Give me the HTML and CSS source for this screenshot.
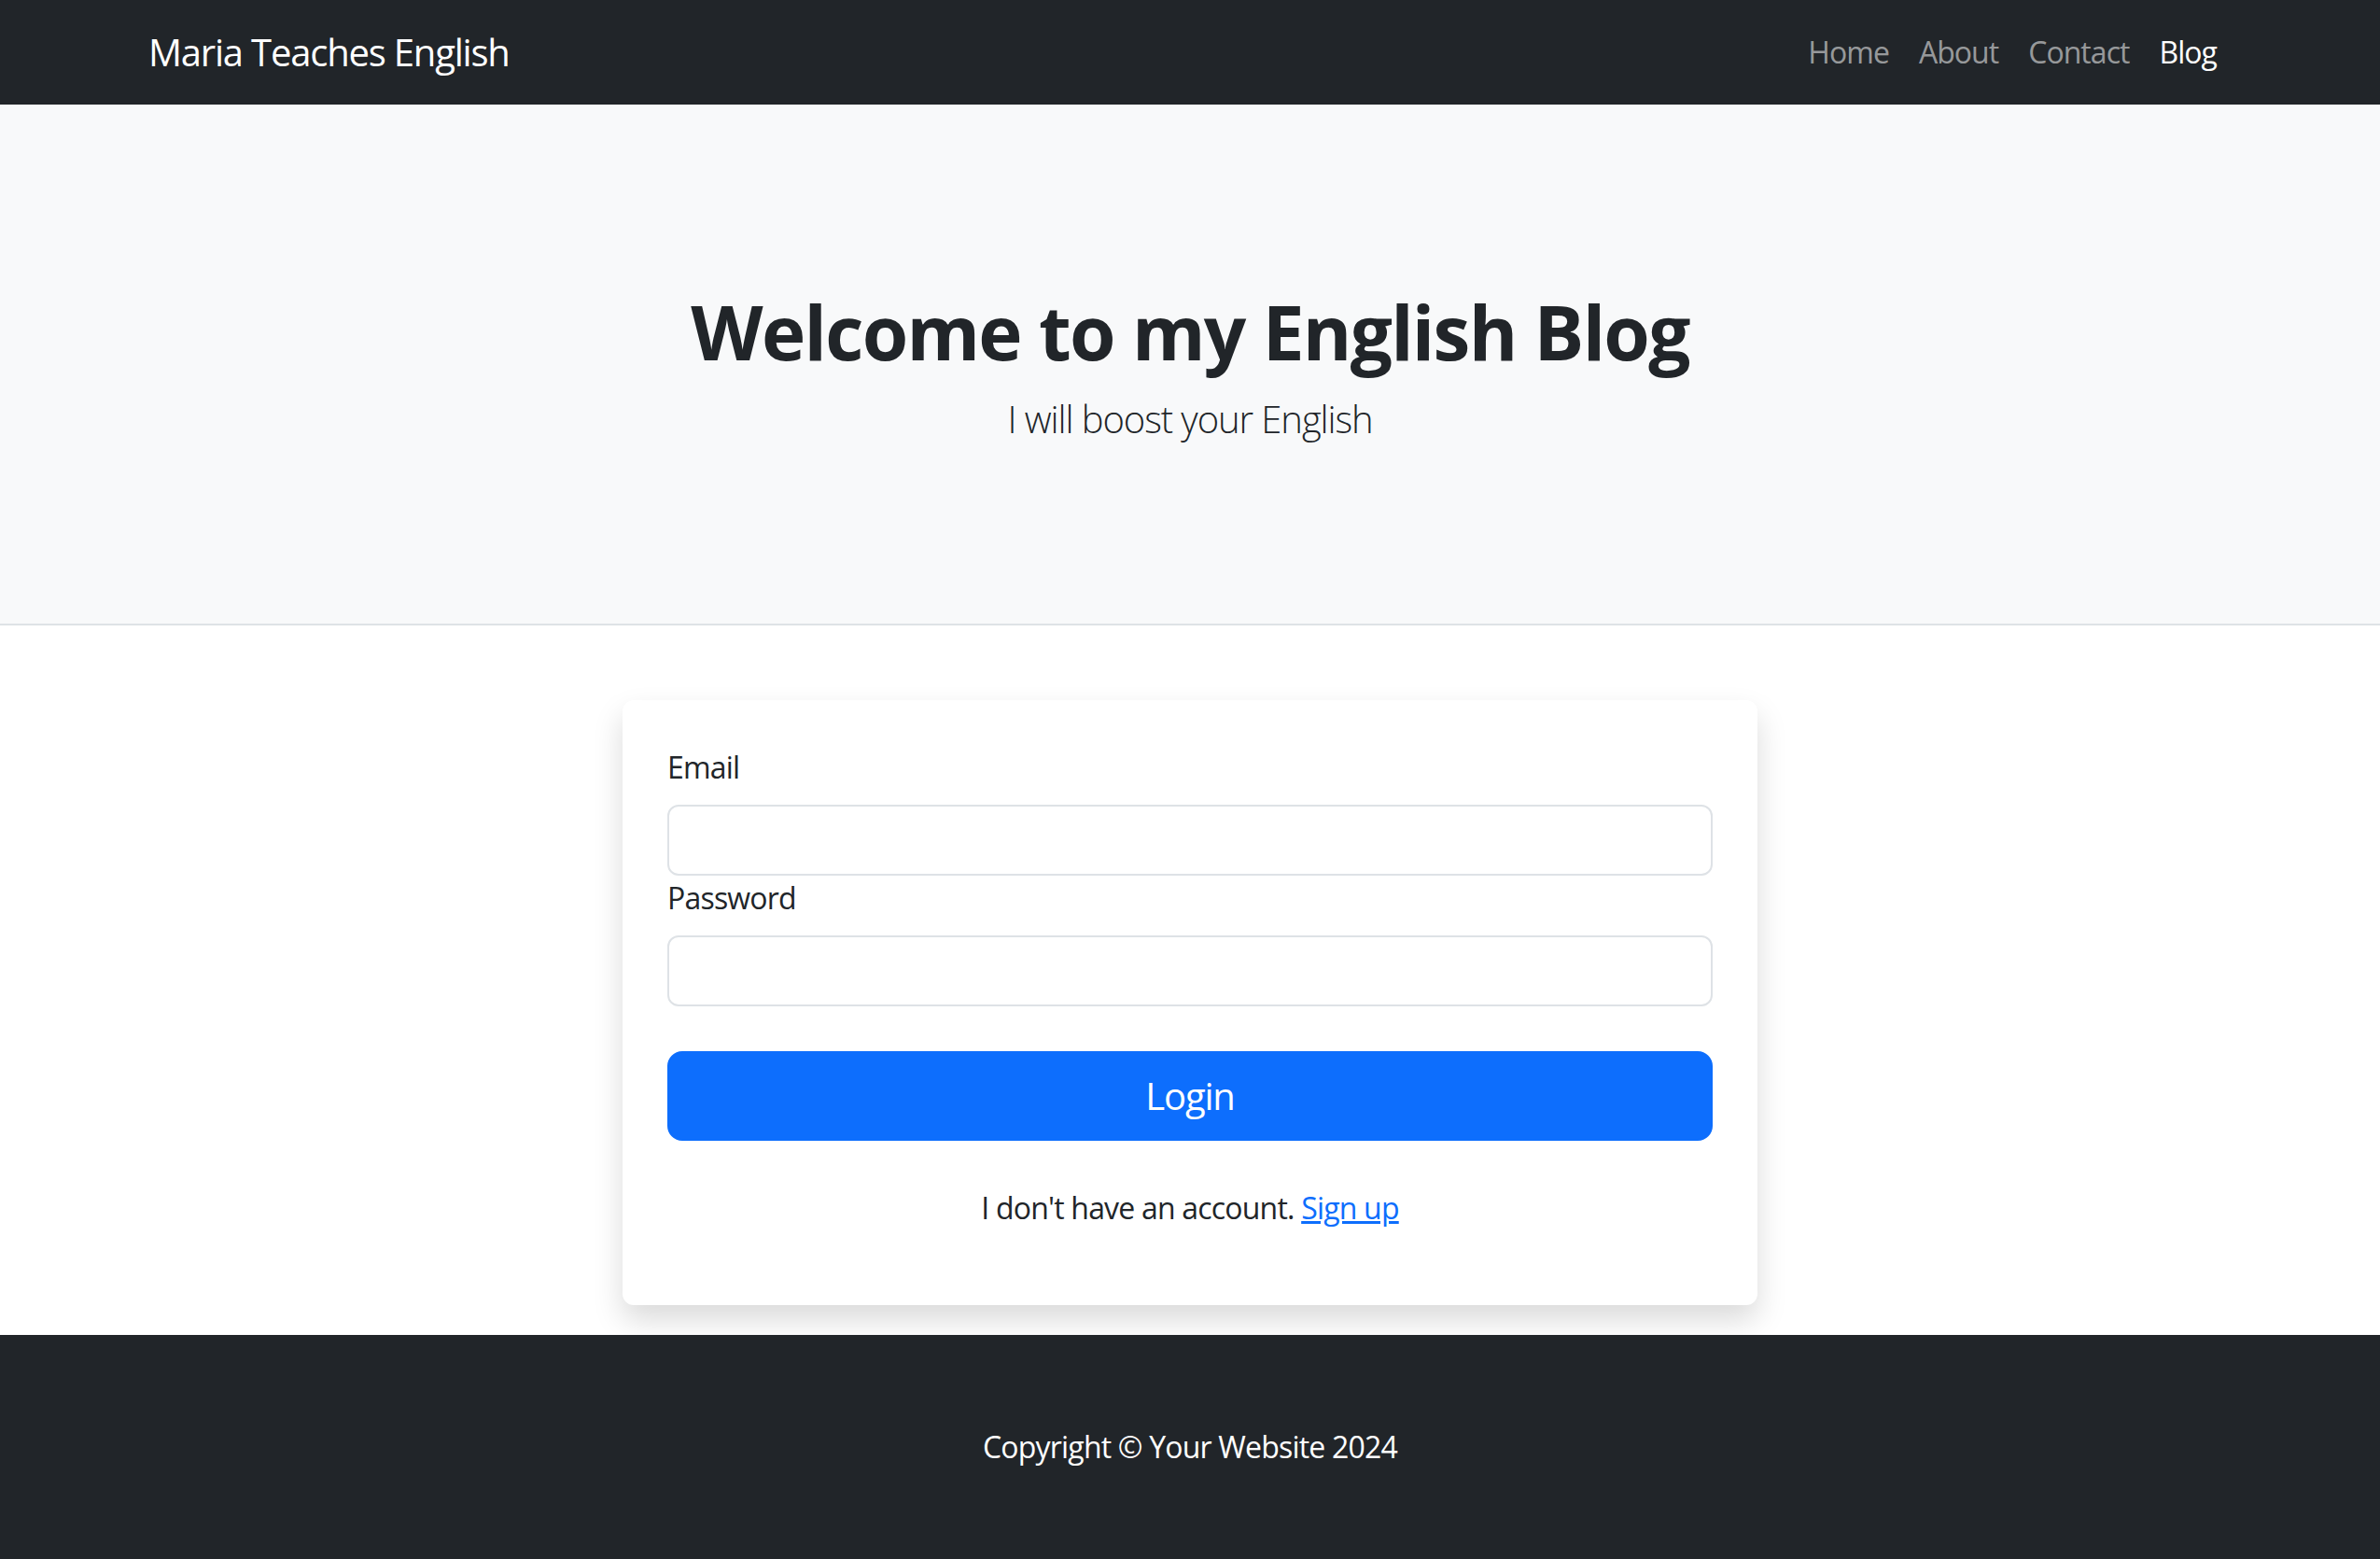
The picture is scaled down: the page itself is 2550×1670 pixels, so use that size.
FILE: index.html
```html
<!DOCTYPE html>
<html lang="en">
<head>
<meta charset="utf-8">
<title>Maria Teaches English - Blog</title>
<link rel="stylesheet" href="styles.css">
</head>
<body>
<nav class="navbar">
  <div class="container nav-inner">
    <a class="brand" href="#">Maria Teaches English</a>
    <ul class="nav-links">
      <li><a class="nav-link" href="#">Home</a></li>
      <li><a class="nav-link" href="#">About</a></li>
      <li><a class="nav-link" href="#">Contact</a></li>
      <li><a class="nav-link active" href="#">Blog</a></li>
    </ul>
  </div>
</nav>
<header class="hero">
  <h1 class="hero-title">Welcome to my English Blog</h1>
  <p class="hero-lead">I will boost your English</p>
</header>
<main class="main">
  <form class="card">
    <label class="field-label" for="email">Email</label>
    <input class="field-input" id="email" type="email">
    <label class="field-label" for="password">Password</label>
    <input class="field-input" id="password" type="password">
    <button class="btn-login" type="button">Login</button>
    <p class="signup">I don't have an account. <a class="signup-link" href="#">Sign up</a></p>
  </form>
</main>
<footer class="footer">
  <p class="footer-text">Copyright © Your Website 2024</p>
</footer>
</body>
</html>
```
FILE: styles.css
```css
* { box-sizing: border-box; }
html, body { margin: 0; padding: 0; }
body {
  font-family: "Open Sans", "Noto Sans", "Liberation Sans", sans-serif;
  font-size: 32px;
  line-height: 48px;
  color: #212529;
  background: #fff;
  letter-spacing: -0.025em;
}
.container {
  max-width: 2280px;
  margin: 0 auto;
  padding: 0 24px;
}
.navbar {
  background: #212529;
  height: 112px;
}
.nav-inner {
  height: 100%;
  display: flex;
  align-items: center;
  justify-content: space-between;
}
.brand {
  color: #fff;
  font-size: 40px;
  line-height: 60px;
  text-decoration: none;
  letter-spacing: -0.03em;
}
.nav-links {
  list-style: none;
  margin: 0;
  padding: 0;
  display: flex;
}
.nav-link {
  display: block;
  padding: 0 16px;
  color: rgba(255, 255, 255, 0.55);
  text-decoration: none;
  letter-spacing: -0.03em;
}
.nav-link.active { color: #fff; }
.hero {
  background: #f8f9fa;
  border-bottom: 2px solid #dee2e6;
  padding: 195px 0 189px;
  text-align: center;
}
.hero-title {
  margin: 0 0 16px;
  font-size: 80px;
  line-height: 96px;
  font-weight: 700;
  letter-spacing: -1.7px;
}
.hero-lead {
  margin: 0;
  font-size: 40px;
  line-height: 60px;
  font-weight: 300;
  letter-spacing: -0.027em;
}
.main {
  padding: 80px 0 32px;
}
.card {
  width: 1216px;
  margin: 0 auto;
  padding: 48px;
  background: #fff;
  border-radius: 12px;
  box-shadow: 0 16px 32px rgba(0, 0, 0, 0.15);
}
.field-label {
  display: block;
  margin-bottom: 16px;
}
.field-input {
  display: block;
  width: 100%;
  height: 76px;
  padding: 12px 24px;
  border: 2px solid #dee2e6;
  border-radius: 12px;
  font: inherit;
  color: #212529;
  background: #fff;
}
.btn-login {
  display: block;
  width: 100%;
  height: 96px;
  margin-top: 48px;
  border: 2px solid #0d6efd;
  border-radius: 16px;
  background: #0d6efd;
  color: #fff;
  font-family: inherit;
  font-size: 40px;
  line-height: 60px;
  letter-spacing: -0.03em;
}
.signup {
  margin: 48px 0 32px;
  text-align: center;
}
.signup-link { color: #0d6efd; text-decoration: underline; }
.footer {
  background: #212529;
  padding: 96px 0;
  text-align: center;
}
.footer-text {
  margin: 0;
  color: #fff;
}
```
